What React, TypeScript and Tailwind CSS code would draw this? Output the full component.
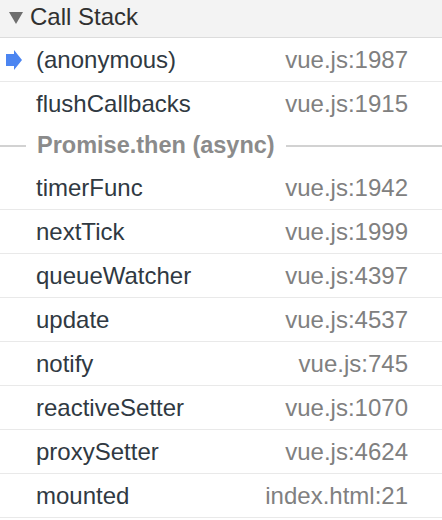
import React from "react";

type Frame = { name: string; loc: string; active?: boolean; noBorder?: boolean };

const before: Frame[] = [
  { name: "(anonymous)", loc: "vue.js:1987", active: true },
  { name: "flushCallbacks", loc: "vue.js:1915", noBorder: true },
];
const after: Frame[] = [
  { name: "timerFunc", loc: "vue.js:1942" },
  { name: "nextTick", loc: "vue.js:1999" },
  { name: "queueWatcher", loc: "vue.js:4397" },
  { name: "update", loc: "vue.js:4537" },
  { name: "notify", loc: "vue.js:745" },
  { name: "reactiveSetter", loc: "vue.js:1070" },
  { name: "proxySetter", loc: "vue.js:4624" },
  { name: "mounted", loc: "index.html:21" },
];

function Row({ f }: { f: Frame }) {
  return (
    <div
      className={
        "relative flex h-[44px] items-center pl-[36px] pr-[34px] " +
        (f.noBorder ? "" : "border-b border-[#e9e9e9]")
      }
    >
      {f.active && (
        <svg
          className="absolute left-[6px] top-[12px]"
          width="17"
          height="20"
          viewBox="0 0 17 20"
        >
          <path d="M0 4 H8 V0 L16 10 L8 20 V16 H0 Z" fill="#4c85f1" />
        </svg>
      )}
      <span className="flex-1 text-[#303942]">{f.name}</span>
      <span className="text-[#808080]">{f.loc}</span>
    </div>
  );
}

export default function App() {
  return (
    <div
      className="w-[442px] h-[520px] overflow-hidden bg-white text-[24px] leading-none"
      style={{ fontFamily: '"Liberation Sans", Arial, sans-serif' }}
    >
      <div className="flex h-[38px] items-center border-b border-[#dcdcdc] bg-[#f3f3f3] pb-[3px] pl-[9px]">
        <svg width="14" height="12" viewBox="0 0 14 12" className="mt-[2px]">
          <path d="M0 0 H14 L7 12 Z" fill="#6e6e6e" />
        </svg>
        <span className="ml-[7px] text-[#303030]">Call Stack</span>
      </div>
      {before.map((f) => (
        <Row key={f.name} f={f} />
      ))}
      <div className="flex h-[40px] items-center">
        <div className="h-[2px] w-[26px] bg-[#d2d2d2]" />
        <span className="px-[11px] text-[23.5px] font-bold text-[#8b8b8b]">
          Promise.then (async)
        </span>
        <div className="h-[2px] flex-1 bg-[#d2d2d2]" />
      </div>
      {after.map((f) => (
        <Row key={f.name} f={f} />
      ))}
    </div>
  );
}
